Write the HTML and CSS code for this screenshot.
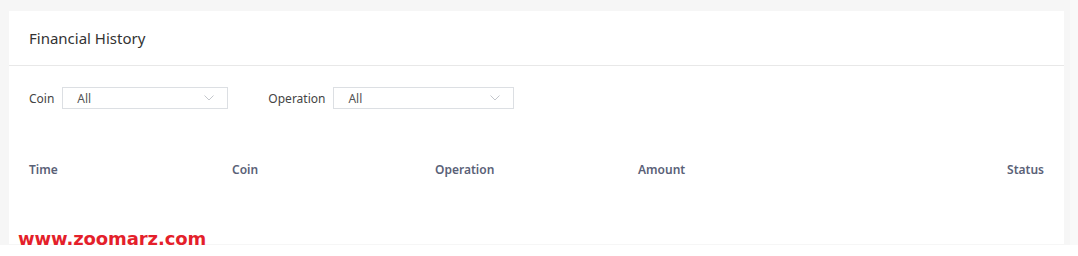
FILE: index.html
```html
<!DOCTYPE html>
<html lang="en">
<head>
    <meta charset="UTF-8">
    <title>Financial History</title>
    <link rel="stylesheet" href="styles.css">
</head>
<body>
    <div class="page">
        <div class="card">
            <div class="card-header">Financial History</div>
            <div class="filters">
                <label class="filter">
                    <span class="filter-label">Coin</span>
                    <span class="select select-coin">
                        <span>All</span>
                        <svg class="chevron" width="10" height="6" viewBox="0 0 10 6"><path d="M0.5 0.5 L5 5 L9.5 0.5" fill="none" stroke="#c4c7cc" stroke-width="1"/></svg>
                    </span>
                </label>
                <label class="filter">
                    <span class="filter-label">Operation</span>
                    <span class="select select-op">
                        <span>All</span>
                        <svg class="chevron" width="10" height="6" viewBox="0 0 10 6"><path d="M0.5 0.5 L5 5 L9.5 0.5" fill="none" stroke="#c4c7cc" stroke-width="1"/></svg>
                    </span>
                </label>
            </div>
            <div class="table-head">
                <div>Time</div>
                <div>Coin</div>
                <div>Operation</div>
                <div>Amount</div>
                <div class="right">Status</div>
            </div>
        </div>
        <div class="gutter"></div>
    </div>
    <div class="footer"></div>
    <div class="watermark">www.zoomarz.com</div>
</body>
</html>
```

FILE: styles.css
```css
body {
    margin: 0;
    background: #fff;
    font-family: 'Noto Sans', sans-serif;
    position: relative;
}
.page {
    background: #f6f6f6;
    padding: 11px 0 0 9px;
    height: 245px;
    display: flex;
    box-sizing: border-box;
}
.card {
    background: #fff;
    width: 1055px;
    height: 233px;
}
.gutter {
    margin-left: 6px;
    flex: 1;
    background: #f9f9f9;
    margin-top: -11px;
}
.card-header {
    height: 54px;
    line-height: 54px;
    padding: 0 20px;
    font-size: 15px;
    color: #333;
    border-bottom: 1px solid #e8e8e8;
}
.filters {
    display: flex;
    gap: 40px;
    padding: 21px 20px 0;
}
.filter {
    display: flex;
    align-items: center;
    gap: 8px;
}
.filter-label {
    font-size: 12px;
    color: #444;
}
.select {
    height: 22px;
    box-sizing: border-box;
    border: 1px solid #dcdfe3;
    display: flex;
    align-items: center;
    justify-content: space-between;
    padding: 0 13px 0 14px;
    font-size: 12px;
    color: #555;
}
.select-coin { width: 166px; }
.select-op { width: 181px; }
.table-head {
    display: grid;
    grid-template-columns: repeat(5, 1fr);
    padding: 0 20px;
    margin-top: 52px;
    font-size: 12px;
    font-weight: 600;
    color: #5a6177;
}
.table-head .right { text-align: right; }
.footer {
    height: 11px;
    background: #fff;
}
.watermark {
    position: absolute;
    left: 18px;
    top: 228px;
    font-family: 'DejaVu Sans', sans-serif;
    font-weight: bold;
    font-size: 18px;
    color: #e41f2b;
    letter-spacing: -0.1px;
}
```
